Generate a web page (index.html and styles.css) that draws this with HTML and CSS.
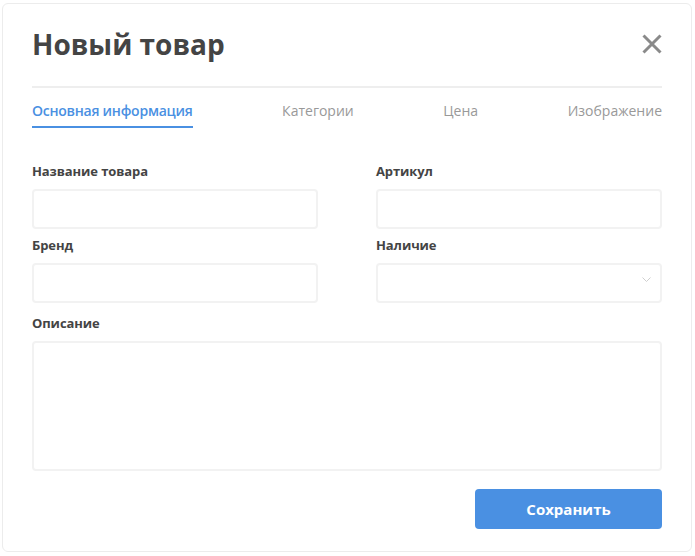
FILE: index.html
```html
<!DOCTYPE html>
<html lang="ru">
<head>
<meta charset="utf-8">
<title>Новый товар</title>
<link rel="stylesheet" href="styles.css">
</head>
<body>
<div class="card">
  <div class="header">
    <h1 class="title">Новый товар</h1>
    <button class="close" aria-label="Закрыть">
      <svg width="20" height="20" viewBox="0 0 20 20"><path d="M1.5 1.5 L18.5 18.5 M18.5 1.5 L1.5 18.5" stroke="#8a8a8a" stroke-width="3" fill="none"/></svg>
    </button>
  </div>
  <div class="tabs">
    <span class="tab active">Основная информация</span>
    <span class="tab">Категории</span>
    <span class="tab">Цена</span>
    <span class="tab">Изображение</span>
  </div>
  <div class="form">
    <div class="grid">
      <div class="field">
        <label class="label">Название товара</label>
        <div class="input"></div>
      </div>
      <div class="field">
        <label class="label">Артикул</label>
        <div class="input"></div>
      </div>
      <div class="field">
        <label class="label">Бренд</label>
        <div class="input"></div>
      </div>
      <div class="field">
        <label class="label">Наличие</label>
        <div class="input select">
          <svg class="chevron" width="9" height="5" viewBox="0 0 9 5"><path d="M0.5 0.5 L4.5 4.5 L8.5 0.5" stroke="#cfcfcf" stroke-width="1" fill="none"/></svg>
        </div>
      </div>
    </div>
    <div class="field description">
      <label class="label">Описание</label>
      <div class="input textarea"></div>
    </div>
  </div>
  <div class="actions">
    <button class="save">Сохранить</button>
  </div>
</div>
</body>
</html>
```

FILE: styles.css
```css
* { box-sizing: border-box; }
html, body { margin: 0; padding: 0; background: #fff; }
body {
  padding: 3px 0 0 2px;
  font-family: "Open Sans", "Noto Sans", sans-serif;
  color: #444;
}
.card {
  width: 690px;
  height: 549px;
  border: 1px solid #ececec;
  border-radius: 6px;
  padding: 20px 29px 0 29px;
  background: #fff;
}
.header {
  display: flex;
  justify-content: space-between;
  align-items: center;
  padding-bottom: 22px;
  border-bottom: 2px solid #eeeeee;
}
.title {
  margin: 0;
  font-size: 28px;
  line-height: 40px;
  font-weight: 700;
  color: #444;
}
.close {
  border: 0;
  background: none;
  padding: 0;
  width: 20px;
  height: 20px;
  display: flex;
}
.tabs {
  display: flex;
  justify-content: space-between;
  padding-top: 13px;
}
.tab {
  font-size: 14px;
  line-height: 20px;
  color: #999;
  padding-bottom: 5px;
  border-bottom: 2px solid transparent;
}
.tab.active {
  color: #4a90e2;
  font-weight: 600;
  letter-spacing: -0.25px;
  border-bottom-color: #4a90e2;
}
.form {
  margin-top: 34px;
}
.grid {
  display: grid;
  grid-template-columns: 1fr 1fr;
  column-gap: 58px;
}
.field {
  display: flex;
  flex-direction: column;
  margin-bottom: 7px;
}
.description {
  margin-top: 4px;
}
.label {
  font-size: 13px;
  line-height: 18px;
  font-weight: 700;
  letter-spacing: -0.1px;
  color: #444;
  margin-bottom: 9px;
}
.input {
  height: 40px;
  border: 2px solid #f2f2f2;
  border-radius: 4px;
  background: #fff;
}
.select {
  position: relative;
}
.chevron {
  position: absolute;
  right: 9px;
  top: 12px;
}
.textarea {
  height: 130px;
}
.actions {
  display: flex;
  justify-content: flex-end;
  margin-top: 18px;
}
.save {
  width: 187px;
  height: 40px;
  border: 0;
  border-radius: 4px;
  background: #4a90e2;
  color: #fff;
  font-family: "Open Sans", "Noto Sans", sans-serif;
  font-size: 15px;
  font-weight: 700;
}
```
